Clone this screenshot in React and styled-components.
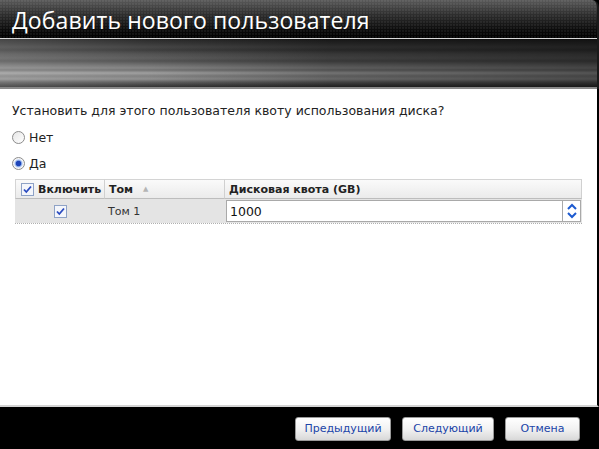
import styled, { createGlobalStyle } from "styled-components";

const GlobalStyle = createGlobalStyle`
  html, body {
    margin: 0;
    padding: 0;
    background: #000;
  }
  body {
    font-family: "DejaVu Sans", Verdana, sans-serif;
  }
`;

function CheckMark() {
  return (
    <svg width="13" height="13" viewBox="0 0 13 13">
      <rect x="0.5" y="0.5" width="12" height="12" fill="#f4f6fb" stroke="#8ea2c6" />
      <path d="M3 6.5 L5.3 9 L10 3.5" fill="none" stroke="#2a4bc0" strokeWidth="1.8" />
    </svg>
  );
}

function Spinner() {
  return (
    <svg width="12" height="20" viewBox="0 0 12 20">
      <path d="M2 8 L6 4 L10 8" fill="none" stroke="#1c5ad0" strokeWidth="2" />
      <path d="M2 12 L6 16 L10 12" fill="none" stroke="#1c5ad0" strokeWidth="2" />
    </svg>
  );
}

function App() {
  return (
    <>
      <GlobalStyle />
      <Dialog>
        <Header>
          <TitleBar>
            <Title>Добавить нового пользователя</Title>
          </TitleBar>
          <Band />
        </Header>
        <Content>
          <Question>Установить для этого пользователя квоту использования диска?</Question>
          <RadioRow>
            <Radio />
            <span>Нет</span>
          </RadioRow>
          <RadioRow>
            <Radio $checked />
            <span>Да</span>
          </RadioRow>
          <Grid>
            <HeadCell $first>
              <CheckMark />
              <span>Включить</span>
            </HeadCell>
            <HeadCell>
              <span>Том</span>
              <SortArrow>▲</SortArrow>
            </HeadCell>
            <HeadCell $last>Дисковая квота (GB)</HeadCell>
            <RowCell $center>
              <CheckMark />
            </RowCell>
            <RowCell>Том 1</RowCell>
            <InputCell>
              <QuotaInput>1000</QuotaInput>
              <SpinBox>
                <Spinner />
              </SpinBox>
            </InputCell>
          </Grid>
        </Content>
        <Footer>
          <Button $w={96}>Предыдущий</Button>
          <Button $w={92}>Следующий</Button>
          <Button $w={75}>Отмена</Button>
        </Footer>
      </Dialog>
    </>
  );
}

export default App;

const Dialog = styled.div`
  width: 599px;
  height: 449px;
  display: flex;
  flex-direction: column;
  background: #000;
  overflow: hidden;
`;

const Header = styled.div`
  display: flex;
  flex-direction: column;
  border-top-right-radius: 7px;
  overflow: hidden;
  border-right: 2px solid #1a1a1a;
`;

const TitleBar = styled.div`
  height: 38px;
  display: flex;
  align-items: center;
  padding-left: 12px;
  border-bottom: 1px solid #d8d8d8;
  background:
    radial-gradient(circle at 1px 1px, rgba(255, 255, 255, 0.06) 1px, transparent 1.2px) 0 0 / 3px 3px,
    linear-gradient(#5a5a5a 0%, #2c2c2c 40%, #0a0a0a 80%, #000 100%);
`;

const Title = styled.div`
  color: #fff;
  font-family: "Open Sans", sans-serif;
  font-size: 23px;
  font-weight: 400;
  line-height: 1;
  margin-top: 3px;
  letter-spacing: 0.1px;
`;

const Band = styled.div`
  height: 48px;
  border-bottom: 2px solid #8a8a8a;
  background:
    linear-gradient(90deg, rgba(255, 255, 255, 0.18) 0%, rgba(255, 255, 255, 0.05) 25%, rgba(0, 0, 0, 0.25) 55%, rgba(0, 0, 0, 0.45) 100%),
    linear-gradient(
      #1e1e1e 0px,
      #2c2c2c 4px,
      #3c3c3c 8px,
      #333 11px,
      #4a4a4a 15px,
      #555 19px,
      #4a4a4a 22px,
      #6a6a6a 26px,
      #7e7e7e 29px,
      #6a6a6a 31px,
      #9a9a9a 34px,
      #7a7a7a 37px,
      #8a8a8a 40px,
      #5a5a5a 43px,
      #3a3a3a 46px,
      #2a2a2a 48px
    );
`;

const Content = styled.div`
  flex: 1;
  background: #fff;
  border-right: 2px solid #000;
  border-bottom: 2px solid #d4d4d4;
  padding: 15px 0 0 12px;
  display: flex;
  flex-direction: column;
  align-items: flex-start;
  color: #222;
`;

const Question = styled.div`
  font-size: 12.5px;
  line-height: 14px;
  margin-bottom: 11px;
`;

const RadioRow = styled.div`
  display: flex;
  align-items: center;
  gap: 4px;
  font-size: 12.5px;
  height: 16px;
  margin-bottom: 10px;
`;

const Radio = styled.span`
  width: 11px;
  height: 11px;
  border-radius: 50%;
  border: 1px solid #8c8c8c;
  background: ${(p) =>
    p.$checked
      ? "radial-gradient(circle, #1e44b8 0 2.4px, #7fa2e6 3px, #dfe8f8 4.2px, #f8f8f8 5px)"
      : "linear-gradient(135deg, #e6e6e6, #fff)"};
`;

const Grid = styled.div`
  margin: -2px 0 0 3px;
  width: 567px;
  display: grid;
  grid-template-columns: 90px 120px 1fr;
  grid-template-rows: 20px 24px;
  border-bottom: 1px dotted #b0b0b0;
`;

const HeadCell = styled.div`
  display: flex;
  align-items: center;
  gap: 4px;
  padding-left: ${(p) => (p.$first ? "5px" : "4px")};
  font-size: 11px;
  font-weight: bold;
  color: #222;
  background: linear-gradient(#fafafa, #ebebeb);
  border-top: 1px solid #d4d4d4;
  border-bottom: 1px solid #bdbdbd;
  border-left: ${(p) => (p.$first ? "1px solid #d4d4d4" : "none")};
  border-right: 1px solid #d0d0d0;
`;

const SortArrow = styled.span`
  font-size: 7px;
  color: #b4b4b4;
  margin-left: 6px;
`;

const RowCell = styled.div`
  display: flex;
  align-items: center;
  justify-content: ${(p) => (p.$center ? "center" : "flex-start")};
  padding-left: ${(p) => (p.$center ? "0" : "3px")};
  font-size: 11px;
  color: #333;
  background: #e4e4e4;
`;

const InputCell = styled.div`
  display: flex;
  background: #e4e4e4;
  padding: 1px;
`;

const QuotaInput = styled.div`
  flex: 1;
  background: #fff;
  border: 1px solid #a9a9a9;
  border-right: none;
  font-size: 12.5px;
  color: #111;
  display: flex;
  align-items: center;
  padding-left: 3px;
`;

const SpinBox = styled.div`
  width: 17px;
  background: #fff;
  border: 1px solid #a9a9a9;
  display: flex;
  align-items: center;
  justify-content: center;
`;

const Footer = styled.div`
  height: 42px;
  display: flex;
  align-items: center;
  justify-content: flex-end;
  gap: 11px;
  padding-right: 19px;
  background: #000;
`;

const Button = styled.button`
  width: ${(p) => p.$w}px;
  height: 24px;
  margin-top: 1px;
  border: 1px solid #9a9a9a;
  border-radius: 3px;
  background: linear-gradient(#ffffff, #f2f2f2 50%, #d8d8d8);
  color: #2044a8;
  font-family: "DejaVu Sans", Verdana, sans-serif;
  font-size: 11px;
  padding: 0;
`;
